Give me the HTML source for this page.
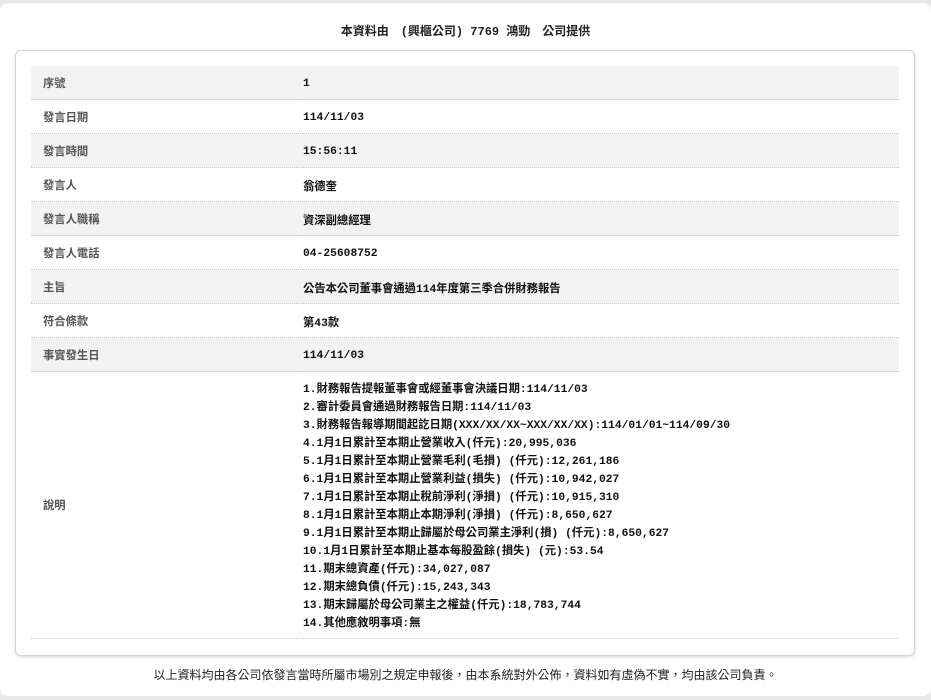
<!DOCTYPE html>
<html><head><meta charset="utf-8"><style>
html,body{margin:0;padding:0;width:931px;height:700px;background:#e9e9e9;overflow:hidden}
.wrap{position:absolute;left:0;top:3px;width:931px;height:693px;background:#fff;border-radius:8px}
.title{position:absolute;top:19px;left:0;width:931px;text-align:center;font:bold 12px "Liberation Mono","Noto Sans CJK TC",monospace;color:#222}
.card{position:absolute;left:15px;top:47px;width:898px;height:604px;border:1px solid #d4d4d4;border-radius:6px;background:#fff;box-shadow:0 1px 3px rgba(0,0,0,.15)}
table{position:absolute;left:15px;top:15px;width:868px;border-collapse:collapse}
td{border-bottom:1px dotted #c8c8c8;height:33px;padding:0;font-size:11.3px;vertical-align:middle}
td.l{width:260px;padding-left:12px;color:#555;font-weight:bold;font-family:"Liberation Sans","Noto Sans CJK TC",sans-serif}
td.v{font-family:"Liberation Mono","Noto Sans CJK TC",monospace;font-weight:bold;color:#111;padding-top:2px;height:31px}
tr.g td{background:#f2f2f2}
td.v.desc{line-height:18px;padding:9px 0 5px 0}
.foot{position:absolute;top:663px;left:0;width:931px;text-align:center;font:12px "Liberation Sans","Noto Sans CJK TC",sans-serif;color:#222}
</style></head><body>
<div class="wrap">
<div class="title">本資料由　(興櫃公司) 7769 鴻勁　公司提供</div>
<div class="card">
<table>
<tr class="g"><td class="l">序號</td><td class="v">1</td></tr>
<tr><td class="l">發言日期</td><td class="v">114/11/03</td></tr>
<tr class="g"><td class="l">發言時間</td><td class="v">15:56:11</td></tr>
<tr><td class="l">發言人</td><td class="v">翁德奎</td></tr>
<tr class="g"><td class="l">發言人職稱</td><td class="v">資深副總經理</td></tr>
<tr><td class="l">發言人電話</td><td class="v">04-25608752</td></tr>
<tr class="g"><td class="l">主旨</td><td class="v">公告本公司董事會通過114年度第三季合併財務報告</td></tr>
<tr><td class="l">符合條款</td><td class="v">第43款</td></tr>
<tr class="g"><td class="l">事實發生日</td><td class="v">114/11/03</td></tr>
<tr><td class="l">說明</td><td class="v desc">1.財務報告提報董事會或經董事會決議日期:114/11/03<br>2.審計委員會通過財務報告日期:114/11/03<br>3.財務報告報導期間起訖日期(XXX/XX/XX~XXX/XX/XX):114/01/01~114/09/30<br>4.1月1日累計至本期止營業收入(仟元):20,995,036<br>5.1月1日累計至本期止營業毛利(毛損) (仟元):12,261,186<br>6.1月1日累計至本期止營業利益(損失) (仟元):10,942,027<br>7.1月1日累計至本期止稅前淨利(淨損) (仟元):10,915,310<br>8.1月1日累計至本期止本期淨利(淨損) (仟元):8,650,627<br>9.1月1日累計至本期止歸屬於母公司業主淨利(損) (仟元):8,650,627<br>10.1月1日累計至本期止基本每股盈餘(損失) (元):53.54<br>11.期末總資產(仟元):34,027,087<br>12.期末總負債(仟元):15,243,343<br>13.期末歸屬於母公司業主之權益(仟元):18,783,744<br>14.其他應敘明事項:無</td></tr>
</table>
</div>
<div class="foot">以上資料均由各公司依發言當時所屬市場別之規定申報後，由本系統對外公佈，資料如有虛偽不實，均由該公司負責。</div>
</div>
</body></html>
